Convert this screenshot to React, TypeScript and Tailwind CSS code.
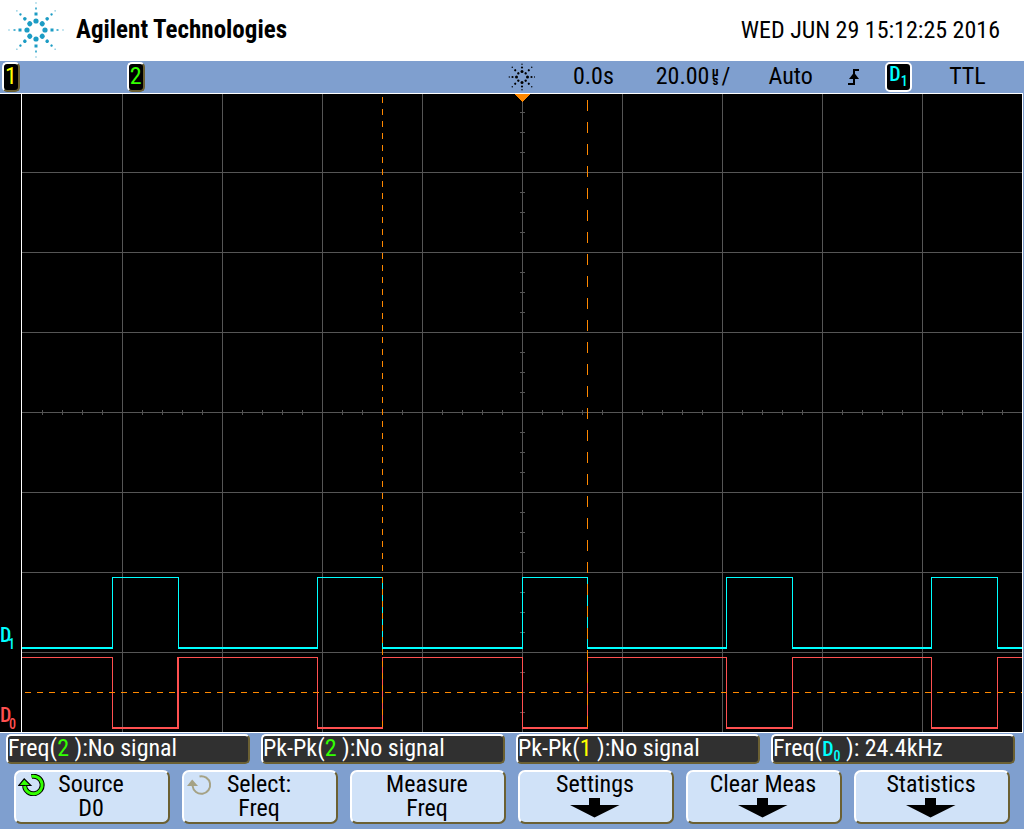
import React, { type ReactNode } from "react";

const BURST_AXIS = [0, 90, 180, 270];
const BURST_DIAGONAL = [45, 135, 225, 315];

function AgilentLogo() {
  return (
    <svg viewBox="-28 -28 56 56" className="size-14 fill-[#1c9cc4]" aria-hidden="true">
      {BURST_AXIS.map((a) => (
        <g key={a} transform={`rotate(${a})`}>
          <circle cx="0" cy="-9" r="2.6" />
          <rect x="-1.5" y="-17.5" width="3" height="3" />
          <rect x="-0.75" y="-22.5" width="1.5" height="2" />
          <rect x="-0.5" y="-27.5" width="1" height="1" />
        </g>
      ))}
      {BURST_DIAGONAL.map((a) => (
        <g key={a} transform={`rotate(${a})`}>
          <circle cx="0" cy="-8.8" r="2.6" />
          <circle cx="0" cy="-15.8" r="1.8" />
          <circle cx="0" cy="-22" r="1.2" />
          <circle cx="0" cy="-27" r="0.6" />
        </g>
      ))}
    </svg>
  );
}

function BurstIcon() {
  return (
    <svg viewBox="-15 -14 28 28" className="size-7 fill-black" aria-hidden="true">
      {BURST_AXIS.map((a) => (
        <g key={a} transform={`rotate(${a})`}>
          <circle cx="0" cy="-5.5" r="1.5" />
          <circle cx="0" cy="-9.5" r="1.1" />
          <circle cx="0" cy="-12.7" r="0.7" />
        </g>
      ))}
      {BURST_DIAGONAL.map((a) => (
        <g key={a} transform={`rotate(${a})`}>
          <circle cx="0" cy="-5.2" r="1.2" />
          <circle cx="0" cy="-9.6" r="1.1" />
          <circle cx="0" cy="-13.8" r="0.7" />
        </g>
      ))}
    </svg>
  );
}

function RisingEdgeIcon() {
  return (
    <svg viewBox="0 0 14 18" className="h-[18px] w-3.5" aria-hidden="true">
      <path d="M12 2H7V16H1" fill="none" stroke="black" strokeWidth="2" shapeRendering="crispEdges" />
      <path d="M7 4.5L12 11H2Z" fill="black" />
    </svg>
  );
}

function KnobIcon({ active }: { active: boolean }) {
  const arc = "M13.5 2.4A8.8 8.8 0 1 1 6.6 12";
  return (
    <svg viewBox="0 0 27 22" className="absolute top-0.5 left-0.5 h-[22px] w-[27px]" aria-hidden="true">
      {active ? (
        <>
          <path d={arc} fill="none" stroke="black" strokeWidth="5" />
          <path d="M6.2 4.8L0.8 11.5H12.8Z" fill="#33ff00" stroke="black" strokeWidth="1.2" />
          <path d={arc} fill="none" stroke="#33ff00" strokeWidth="3" />
        </>
      ) : (
        <>
          <path d={arc} fill="none" stroke="#a5a285" strokeWidth="2" />
          <path d="M6.2 5.5L1 12H12Z" fill="#a5a285" />
        </>
      )}
    </svg>
  );
}

function DownArrow() {
  return (
    <svg viewBox="0 0 50 20" className="mt-0.5 h-5 w-[50px]" aria-hidden="true">
      <path d="M19 0H30V7H49.5L24.5 19.5L0 7H19Z" fill="black" />
    </svg>
  );
}

function DigitalLabel({ n }: { n: number }) {
  return (
    <span className="inline-flex text-xl leading-5 font-medium text-[#00ffff]">
      D<span className="translate-y-1 self-end text-sm leading-none">{n}</span>
    </span>
  );
}

function ChannelBadge({ n, className }: { n: number; className: string }) {
  return (
    <span
      className={`flex h-[30px] w-[18px] items-center justify-center rounded-[5px] border-2 border-t-white border-r-[#6b6033] border-b-[#6b6033] border-l-white bg-black pb-0.5 ${className}`}
    >
      {n}
    </span>
  );
}

const PULSES = [
  [112, 178],
  [317, 382],
  [522, 587],
  [726, 792],
  [931, 997],
];
const LEFT = 22;
const RIGHT = 1022;

function Trace({ idle, pulse, color }: { idle: number; pulse: number; color: string }) {
  const low = Math.max(idle, pulse);
  const edges = PULSES.flat();
  const stops = [LEFT, ...edges, RIGHT];
  return (
    <g fill={color}>
      {stops.slice(0, -1).map((x, i) => {
        const y = i % 2 === 0 ? idle : pulse;
        return <rect key={x} x={x} y={y} width={stops[i + 1] - x + (i < 10 ? 1 : 0)} height={y === low ? 2 : 1} />;
      })}
      {edges.map((x) => (
        <rect key={x} x={x} y={Math.min(idle, pulse)} width="1" height={Math.abs(pulse - idle) + 1} />
      ))}
    </g>
  );
}

function Graticule() {
  const columns = Array.from({ length: 9 }, (_, i) => 122 + i * 100);
  const rows = Array.from({ length: 7 }, (_, i) => 172 + i * 80);
  const xTicks = Array.from({ length: 49 }, (_, i) => 42 + i * 20);
  const yTicks = Array.from({ length: 31 }, (_, i) => 112 + i * 20);
  return (
    <svg
      viewBox="0 94 1023 638"
      className="block w-full bg-black [font-family:'Roboto_Condensed',sans-serif]"
      shapeRendering="crispEdges"
      role="img"
      aria-label="Digital waveforms D0 and D1"
    >
      <g fill="#555555">
        {columns.map((x) => <rect key={x} x={x} y="94" width="1" height="638" />)}
        {rows.map((y) => <rect key={y} x="22" y={y} width="1000" height="1" />)}
        {xTicks.map((x) => <rect key={x} x={x} y="410" width="1" height="5" />)}
        {yTicks.map((y) => <rect key={y} x="520" y={y} width="5" height="1" />)}
      </g>
      <rect x="21" y="94" width="1" height="638" fill="white" />
      <rect x="1022" y="94" width="1" height="638" fill="white" />
      <Trace idle={647} pulse={577} color="#00ffff" />
      <Trace idle={657} pulse={727} color="#ff5050" />
      <rect x="177" y="657" width="1" height="71" fill="#ff5050" />
      <g stroke="#ff8800" strokeWidth="1" fill="none">
        <path d="M382.5 97V732" strokeDasharray="6 6" />
        <path d="M587.5 100V732" strokeDasharray="11 11" />
        <path d="M25 692.5H1022" strokeDasharray="6 6" />
      </g>
      <path d="M515 94H530L522.5 102Z" fill="#ff8800" />
      <g fill="#00ffff" fontWeight="500">
        <text x="0" y="642" fontSize="20">D</text>
        <text x="8" y="649" fontSize="14">1</text>
      </g>
      <g fill="#ff5050" fontWeight="500">
        <text x="0" y="722" fontSize="20">D</text>
        <text x="9" y="729" fontSize="14">0</text>
      </g>
    </svg>
  );
}

function Measurement({ children }: { children: ReactNode }) {
  return (
    <div className="h-[30px] overflow-hidden rounded-[5px] border-2 border-t-white border-r-[#6b6033] border-b-[#6b6033] border-l-white bg-[#303030] leading-6 whitespace-pre text-white">
      {children}
    </div>
  );
}

function Softkey({ label, value, knob }: { label: string; value?: string; knob?: "on" | "off" }) {
  return (
    <button
      type="button"
      className="relative flex h-[54px] flex-col items-center rounded-[7px] border-2 border-t-white border-r-[#6b6033] border-b-[#6b6033] border-l-white bg-[#d0e2f8] pr-0.5 leading-6"
    >
      {knob && <KnobIcon active={knob === "on"} />}
      <span>{label}</span>
      {value ? <span>{value}</span> : <DownArrow />}
    </button>
  );
}

export default function App() {
  return (
    <div className="min-h-screen bg-[#7f9fcf] text-2xl text-black [font-family:'Roboto_Condensed',sans-serif]">
      <header className="flex h-[61px] items-center justify-between bg-white pr-6 pb-0.5 pl-2">
        <h1 className="flex items-center gap-3 text-[25px] font-bold">
          <AgilentLogo />
          Agilent Technologies
        </h1>
        <time dateTime="2016-06-29T15:12:25">WED JUN 29 15:12:25 2016</time>
      </header>

      <div className="grid h-8 grid-cols-[125fr_381fr_66fr_83fr_113fr_79fr_38fr_64fr_75fr] items-center pl-0.5 leading-7 whitespace-nowrap">
        <ChannelBadge n={1} className="text-[#ffff00]" />
        <ChannelBadge n={2} className="text-[#33ff00]" />
        <BurstIcon />
        <span className="pb-0.5">0.0s</span>
        <span className="flex items-center pb-0.5">
          20.00
          <span className="flex w-3 flex-col items-center text-[13px] leading-[9px] font-bold">
            <span>µ</span>
            <span>s</span>
          </span>
          /
        </span>
        <span className="pb-0.5">Auto</span>
        <RisingEdgeIcon />
        <span className="flex h-[30px] w-[27px] items-start rounded-[5px] border-2 border-white bg-black pl-0.5">
          <DigitalLabel n={1} />
        </span>
        <span className="pb-0.5">TTL</span>
      </div>

      <main className="mr-px border-y border-white">
        <Graticule />
      </main>

      <footer>
        <div className="grid grid-cols-4 gap-[11px] pt-px pr-[9px] pl-1.5">
          <Measurement>
            Freq(<span className="text-[#33ff00]">2</span> ):No signal
          </Measurement>
          <Measurement>
            Pk-Pk(<span className="text-[#33ff00]">2</span> ):No signal
          </Measurement>
          <Measurement>
            Pk-Pk(<span className="text-[#ffff00]">1</span> ):No signal
          </Measurement>
          <Measurement>
            Freq(<DigitalLabel n={0} /> ): 24.4kHz
          </Measurement>
        </div>
        <div className="grid grid-cols-6 gap-3 px-3.5 pt-1.5 pb-[5px]">
          <Softkey label="Source" value="D0" knob="on" />
          <Softkey label="Select:" value="Freq" knob="off" />
          <Softkey label="Measure" value="Freq" />
          <Softkey label="Settings" />
          <Softkey label="Clear Meas" />
          <Softkey label="Statistics" />
        </div>
      </footer>
    </div>
  );
}
